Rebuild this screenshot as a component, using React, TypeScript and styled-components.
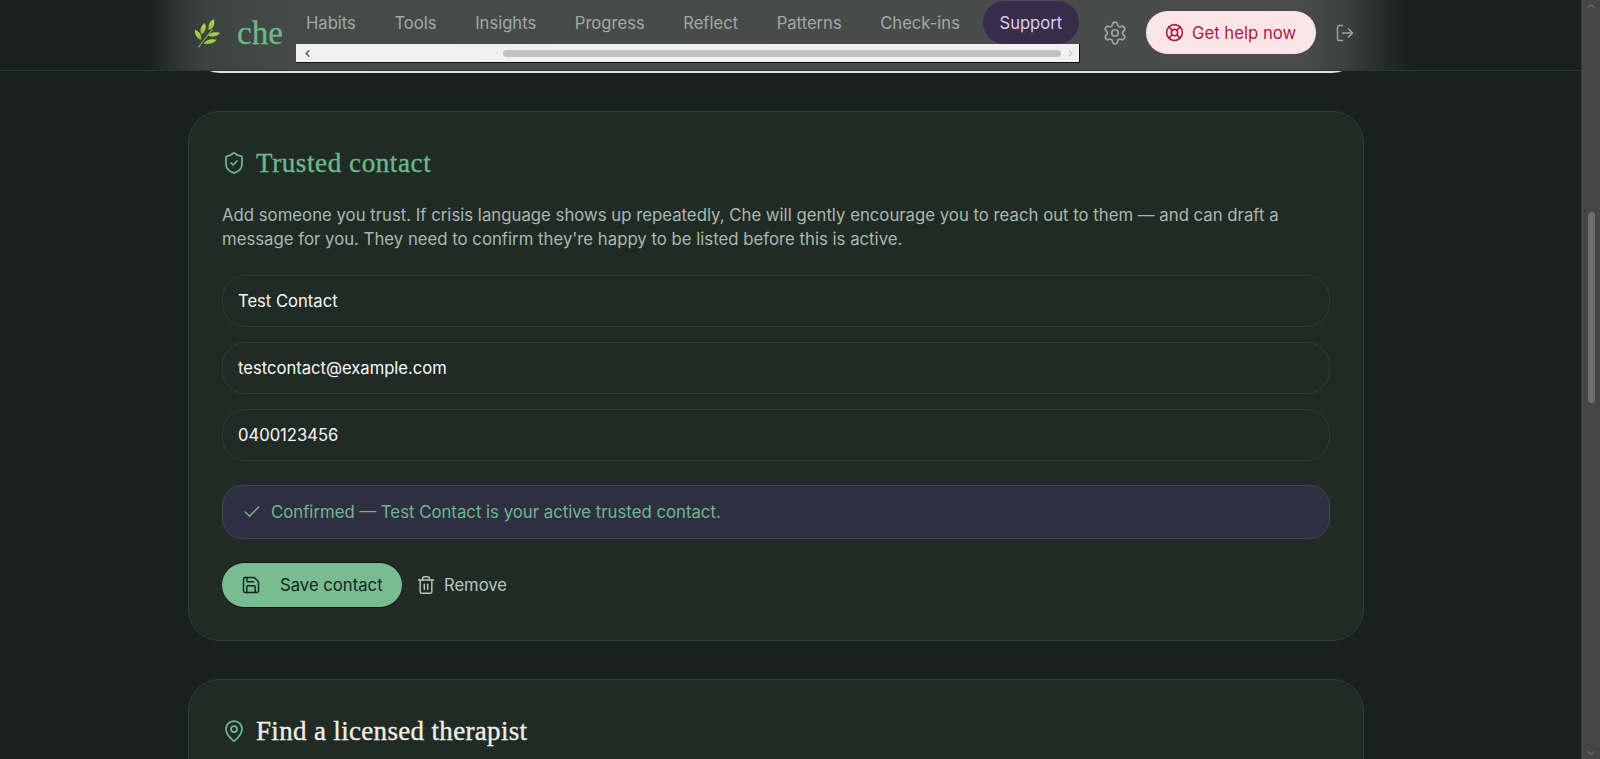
import React from 'react';
import styled, { createGlobalStyle } from 'styled-components';
import {
  Check,
  ChevronDown,
  ChevronLeft,
  ChevronRight,
  ChevronUp,
  LifeBuoy,
  LogOut,
  MapPin,
  Save,
  Settings,
  ShieldCheck,
  Trash2,
} from 'lucide-react';

const GlobalStyle = createGlobalStyle`
  html, body {
    margin: 0;
    padding: 0;
    height: 100%;
    overflow: hidden;
    background: #18211e;
  }
  * {
    box-sizing: border-box;
  }
  body {
    font-family: Inter, "Liberation Sans", sans-serif;
    font-size: 16.6px;
  }
`;

const Viewport = styled.div`
  display: flex;
  height: 759px;
  overflow: hidden;
`;

const Main = styled.main`
  position: relative;
  flex: 1;
  min-width: 0;
  overflow: hidden;
  background: #18211e;
`;

const Header = styled.header`
  position: absolute;
  top: 0;
  left: 0;
  right: 0;
  height: 71px;
  padding: 0 0 5px 194px;
  display: flex;
  align-items: center;
  border-bottom: 1px solid #2c3633;
  background: linear-gradient(
    to right,
    #18211e 150px,
    #2b3330 172px,
    #3d4341 205px,
    #464a48 300px,
    #494c4a 1300px,
    #3c4240 1345px,
    #232c29 1385px,
    #18211e 1410px
  );
`;

const Logo = styled.a`
  display: flex;
  align-items: center;
  gap: 16px;
  width: 102px;
  flex: none;
`;

const LogoText = styled.span`
  font-family: "Liberation Serif", serif;
  font-size: 33px;
  line-height: 40px;
  color: #6bb98c;
  -webkit-text-stroke: 0.3px #6bb98c;
`;

const NavScroller = styled.div`
  align-self: flex-start;
  width: 784px;
  flex: none;
  display: flex;
  flex-direction: column;
  padding-top: 1px;
`;

const NavRow = styled.nav`
  display: flex;
  gap: 6.6px;
  height: 43px;
  margin-left: -6px;
  align-items: flex-start;
`;

const NavItem = styled.a<{ $active?: boolean }>`
  padding: 10px ${(p) => (p.$active ? 17 : 16)}px;
  height: 43px;
  line-height: 24px;
  border-radius: 22px;
  white-space: nowrap;
  color: ${(p) => (p.$active ? '#d9cfe8' : '#9eaca5')};
  background: ${(p) => (p.$active ? '#372c49' : 'transparent')};
`;

const HScrollbar = styled.div`
  height: 19px;
  display: flex;
  align-items: center;
  justify-content: space-between;
  padding: 0 3px 0 6px;
  background: #f1f1f1;
  border-right: 1px solid #101010;
  border-bottom: 1px solid #101010;
  color: #505050;
`;

const HThumb = styled.div`
  width: 558px;
  height: 7px;
  margin-left: auto;
  margin-right: 4px;
  border-radius: 4px;
  background: #c1c1c1;
`;

const GearButton = styled.button`
  display: flex;
  margin-left: 22px;
  padding: 0;
  border: 0;
  background: none;
  color: #93aa9d;
`;

const HelpButton = styled.button`
  display: flex;
  align-items: center;
  gap: 8px;
  height: 43px;
  width: 170px;
  margin-left: 18px;
  padding: 0 0 0 19px;
  border: 0;
  border-radius: 22px;
  background: #fde5e7;
  color: #a81c44;
  font: 400 16.7px Inter, sans-serif;
`;

const LogoutButton = styled.button`
  display: flex;
  margin-left: 19px;
  padding: 0;
  border: 0;
  background: none;
  color: #93aa9d;
`;

const Content = styled.div`
  display: flex;
  flex-direction: column;
  gap: 38px;
  width: 1176px;
  margin-left: 188px;
`;

const PreviousCardEdge = styled.div`
  height: 72.5px;
  margin-bottom: 0.5px;
  border-radius: 0 0 32px 32px;
  background: #ecdcdc;
`;

const Card = styled.section`
  padding: 33px;
  border: 1px solid #323c38;
  border-radius: 32px;
  background: #212b26;
`;

const CardTitle = styled.h2<{ $accent?: boolean }>`
  display: flex;
  align-items: center;
  gap: 10px;
  margin: 0 0 22px;
  height: 36px;
  font-family: "Liberation Serif", serif;
  font-size: 27px;
  font-weight: 400;
  letter-spacing: ${(p) => (p.$accent ? 0.6 : 0.33)}px;
  color: ${(p) => (p.$accent ? '#6bb98c' : '#f0efe8')};
  -webkit-text-stroke: 0.35px currentColor;

  svg {
    flex: none;
    color: #6bb98c;
  }
`;

const Intro = styled.p`
  margin: 0 0 24px;
  font-size: 16.75px;
  line-height: 24px;
  color: #a9b8af;
`;

const FieldStack = styled.div`
  display: flex;
  flex-direction: column;
  gap: 15px;
`;

const Field = styled.input`
  width: 100%;
  height: 52px;
  padding: 0 15px;
  border: 1px solid #333d38;
  border-radius: 24px;
  outline: none;
  background: #212b26;
  color: #fafafa;
  font: 16.6px Inter, sans-serif;
`;

const StatusNote = styled.div`
  display: flex;
  align-items: center;
  gap: 9px;
  height: 54px;
  margin-top: 24px;
  padding: 0 19px;
  border: 1px solid #3f4550;
  border-radius: 20px;
  background: #302f41;
  color: #6bb98c;
  font-size: 16.75px;
`;

const Actions = styled.div`
  display: flex;
  align-items: center;
  gap: 14px;
  margin-top: 24px;
`;

const SaveButton = styled.button`
  display: flex;
  align-items: center;
  gap: 19px;
  width: 180px;
  height: 44px;
  padding: 0 0 0 19px;
  border: 0;
  border-radius: 22px;
  box-shadow: 0 -1px 0 #0e1311, 0 1px 0 #0e1311;
  background: #77bc92;
  color: #14241b;
  font: 400 16.7px Inter, sans-serif;
`;

const RemoveButton = styled.button`
  display: flex;
  align-items: center;
  gap: 8px;
  padding: 0;
  border: 0;
  background: none;
  color: #b9c5be;
  font: 16.6px Inter, sans-serif;
`;

const VScrollbar = styled.aside`
  flex: none;
  width: 19px;
  display: flex;
  flex-direction: column;
  align-items: center;
  border-left: 1px solid #3a3a3a;
  background: #454545;
  color: #8a8a8a;
`;

const VThumb = styled.div`
  width: 7px;
  height: 191px;
  margin-top: 200px;
  margin-bottom: auto;
  border-radius: 4px;
  background: #6e6e6e;
`;

const navItems = ['Habits', 'Tools', 'Insights', 'Progress', 'Reflect', 'Patterns', 'Check-ins'];

const LeafMark = () => (
  <svg width="27" height="30" viewBox="26 24 80 88" fill="none">
    <defs>
      <linearGradient id="leaf" x1="0" y1="0" x2="0" y2="1">
        <stop offset="0" stopColor="#b9de52" />
        <stop offset="1" stopColor="#86b83f" />
      </linearGradient>
    </defs>
    <path d="M40 110C50 95 64 78 80 58" stroke="#8fbb4a" strokeWidth="3" strokeLinecap="round" />
    <g fill="url(#leaf)">
      <path d="M48 72C42 58 46 48 58 38C64 52 60 64 48 72Z" />
      <path d="M70 60C66 46 72 34 84 27C90 42 84 54 70 60Z" />
      <path d="M47 88C34 84 28 72 29 58C42 64 50 74 47 88Z" />
      <path d="M68 76C76 66 90 64 103 68C94 78 82 82 68 76Z" />
      <path d="M54 99C62 88 78 84 93 88C84 99 70 104 54 99Z" />
    </g>
  </svg>
);

const App: React.FC = () => {
  return (
    <Viewport>
      <GlobalStyle />
      <Main>
        <Content>
          <PreviousCardEdge />
          <Card>
            <CardTitle $accent>
              <ShieldCheck size={24} strokeWidth={1.75} />
              Trusted contact
            </CardTitle>
            <Intro>
              Add someone you trust. If crisis language shows up repeatedly, Che will gently encourage you to reach out
              to them — and can draft a message for you. They need to confirm they're happy to be listed before this is
              active.
            </Intro>
            <FieldStack>
              <Field defaultValue="Test Contact" />
              <Field defaultValue="testcontact@example.com" />
              <Field defaultValue="0400123456" />
            </FieldStack>
            <StatusNote>
              <Check size={20} strokeWidth={1.75} />
              Confirmed — Test Contact is your active trusted contact.
            </StatusNote>
            <Actions>
              <SaveButton>
                <Save size={20} strokeWidth={1.75} />
                Save contact
              </SaveButton>
              <RemoveButton>
                <Trash2 size={20} strokeWidth={1.75} />
                Remove
              </RemoveButton>
            </Actions>
          </Card>
          <Card>
            <CardTitle>
              <MapPin size={24} strokeWidth={1.75} />
              Find a licensed therapist
            </CardTitle>
          </Card>
        </Content>
        <Header>
          <Logo>
            <LeafMark />
            <LogoText>che</LogoText>
          </Logo>
          <NavScroller>
            <NavRow>
              {navItems.map((item) => (
                <NavItem key={item}>{item}</NavItem>
              ))}
              <NavItem $active>Support</NavItem>
            </NavRow>
            <HScrollbar>
              <ChevronLeft size={11} strokeWidth={3} />
              <HThumb />
              <ChevronRight size={11} strokeWidth={2} color="#a0a0a0" />
            </HScrollbar>
          </NavScroller>
          <GearButton>
            <Settings size={26} strokeWidth={1.6} />
          </GearButton>
          <HelpButton>
            <LifeBuoy size={19} strokeWidth={2} />
            Get help now
          </HelpButton>
          <LogoutButton>
            <LogOut size={20} strokeWidth={1.75} />
          </LogoutButton>
        </Header>
      </Main>
      <VScrollbar>
        <ChevronUp size={12} strokeWidth={2} />
        <VThumb />
        <ChevronDown size={12} strokeWidth={2} />
      </VScrollbar>
    </Viewport>
  );
};

export default App;
